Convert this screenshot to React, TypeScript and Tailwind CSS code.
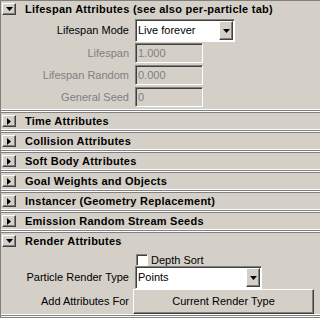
import React from 'react';

const raised =
  'border border-t-white border-l-white border-b-[#404040] border-r-[#404040] shadow-[inset_-1px_-1px_0_#808080]';
const sunken =
  'border border-t-[#808080] border-l-[#808080] border-b-white border-r-white shadow-[inset_1px_1px_0_#404040]';

const Separator = () => (
  <div className="flex flex-col">
    <div className="h-px bg-white" />
    <div className="h-px bg-[#808080]" />
    <div className="h-px bg-white" />
    <div className="h-px bg-[#808080]" />
  </div>
);

const DownArrow = () => (
  <svg width="7" height="4" viewBox="0 0 7 4">
    <path d="M0 0h7L3.5 4z" fill="#000" />
  </svg>
);

const RightArrow = () => (
  <svg width="4" height="7" viewBox="0 0 4 7">
    <path d="M0 0v7l4-3.5z" fill="#000" />
  </svg>
);

const FrameHeader = ({ title, open }: { title: string; open?: boolean }) => (
  <div className="flex h-[16px] items-center">
    <div className={`ml-px flex h-[12px] w-[14px] items-center justify-center bg-[#d4d0c8] ${raised}`}>
      {open ? <DownArrow /> : <RightArrow />}
    </div>
    <span className="ml-[9px] whitespace-nowrap text-[11px] font-bold leading-none tracking-[0.25px] text-black">
      {title}
    </span>
  </div>
);

const Label = ({ text, disabled }: { text: string; disabled?: boolean }) => (
  <div className={`w-[128px] text-right text-[11px] leading-none ${disabled ? 'text-[#808080]' : 'text-black'}`}>
    {text}
  </div>
);

const OptionMenu = ({ value, width }: { value: string; width: string }) => (
  <div className={`ml-[6px] flex h-[23px] items-center bg-white ${sunken} ${width}`}>
    <span className="ml-[2px] flex-1 text-[11px] leading-none text-black">{value}</span>
    <div className={`mr-px flex h-[19px] w-[14px] items-center justify-center bg-[#d4d0c8] ${raised}`}>
      <DownArrow />
    </div>
  </div>
);

const DisabledField = ({ value }: { value: string }) => (
  <div className={`ml-[6px] flex h-[20px] w-[68px] items-center bg-[#d4d0c8] ${sunken}`}>
    <span className="ml-[2px] text-[11px] leading-none text-[#808080]">{value}</span>
  </div>
);

const collapsed = [
  'Time Attributes',
  'Collision Attributes',
  'Soft Body Attributes',
  'Goal Weights and Objects',
  'Instancer (Geometry Replacement)',
  'Emission Random Stream Seeds',
];

export default function App() {
  return (
    <div className="h-[318px] w-[320px] overflow-hidden bg-[#d4d0c8] font-['Liberation_Sans',Arial,sans-serif]">
      <div className="flex w-[340px] flex-col border-l border-[#808080]">
        <div className="h-px bg-[#808080]" />
        <FrameHeader title="Lifespan Attributes (see also per-particle tab)" open />
        <div className="mt-[2px] flex items-center">
          <Label text="Lifespan Mode" />
          <OptionMenu value="Live forever" width="w-[100px]" />
        </div>
        <div className="mt-px flex items-center">
          <Label text="Lifespan" disabled />
          <DisabledField value="1.000" />
        </div>
        <div className="mt-[2px] flex items-center">
          <Label text="Lifespan Random" disabled />
          <DisabledField value="0.000" />
        </div>
        <div className="mt-[2px] flex items-center">
          <Label text="General Seed" disabled />
          <DisabledField value="0" />
        </div>
        <div className="h-[2px]" />

        {collapsed.map((t) => (
          <React.Fragment key={t}>
            <Separator />
            <FrameHeader title={t} />
          </React.Fragment>
        ))}

        <Separator />
        <FrameHeader title="Render Attributes" open />
        <div className="flex h-[17px] items-end">
          <div className={`ml-[135px] h-[12px] w-[12px] bg-white ${sunken}`} />
          <span className="ml-[3px] text-[11px] leading-[12px] text-black">Depth Sort</span>
        </div>
        <div className="flex items-center">
          <Label text="Particle Render Type" />
          <OptionMenu value="Points" width="w-[127px]" />
        </div>
        <div className="flex h-[25px] items-center">
          <Label text="Add Attributes For" />
          <div className={`ml-[4px] flex h-[25px] w-[181px] items-center justify-center bg-[#d4d0c8] ${raised}`}>
            <span className="text-[11px] leading-none text-black">Current Render Type</span>
          </div>
        </div>
        <Separator />
      </div>
    </div>
  );
}
